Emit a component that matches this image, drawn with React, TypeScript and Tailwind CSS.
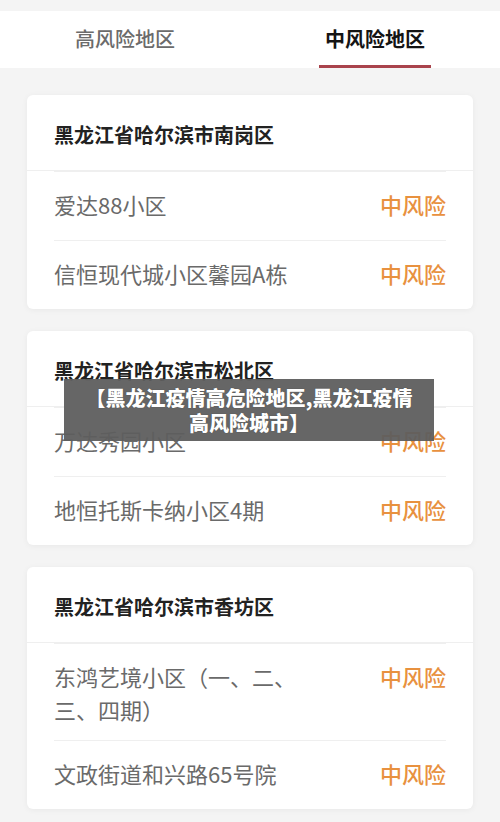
const font = { fontFamily: '"Noto Sans CJK SC", "Noto Sans", sans-serif' }

type Place = { name: string; tall?: boolean }
type Group = { district: string; places: Place[] }

const groups: Group[] = [
  {
    district: '黑龙江省哈尔滨市南岗区',
    places: [{ name: '爱达88小区' }, { name: '信恒现代城小区馨园A栋' }],
  },
  {
    district: '黑龙江省哈尔滨市松北区',
    places: [{ name: '万达秀园小区' }, { name: '地恒托斯卡纳小区4期' }],
  },
  {
    district: '黑龙江省哈尔滨市香坊区',
    places: [{ name: '东鸿艺境小区（一、二、三、四期）', tall: true }, { name: '文政街道和兴路65号院' }],
  },
]

function Tabs() {
  return (
    <div className="mt-[11px] grid h-[57px] grid-cols-2 bg-white">
      <div className="flex items-center justify-center pb-[2px] text-[20px] leading-[26px] font-medium text-[#6b6b6b]">
        高风险地区
      </div>
      <div className="relative flex items-center justify-center pb-[2px] text-[20px] leading-[26px] font-bold text-[#141414]">
        中风险地区
        <span className="absolute bottom-0 left-[69px] h-[3px] w-[112px] bg-[#a9434c]" />
      </div>
    </div>
  )
}

function Row({ place }: { place: Place }) {
  return (
    <div
      className={
        'mx-[27px] flex items-start justify-between border-t border-[#efefef] ' +
        (place.tall ? 'pt-[16px] pb-[14px]' : 'pt-[16px] pb-[19px]')
      }
    >
      <span className="w-[252px] text-[22px] leading-[33px] text-[#6a6a6a]">{place.name}</span>
      <span className="text-[22px] leading-[33px] font-medium text-[#e8913f]">中风险</span>
    </div>
  )
}

function Card({ group }: { group: Group }) {
  return (
    <div className="rounded-[6px] bg-white shadow-[0_1px_6px_rgba(0,0,0,0.05)]">
      <div className="h-[76px] border-b border-[#efefef] px-[27px] pt-[28px] text-[20px] leading-[24px] font-bold text-[#222]">
        {group.district}
      </div>
      {group.places.map((p) => (
        <Row key={p.name} place={p} />
      ))}
    </div>
  )
}

export default function App() {
  return (
    <div className="relative h-[822px] w-[500px] overflow-hidden bg-[#f4f4f4]" style={font}>
      <Tabs />
      <div className="flex flex-col gap-[22px] px-[27px] pt-[27px]">
        {groups.map((g) => (
          <Card key={g.district} group={g} />
        ))}
      </div>
      <div className="absolute left-[64px] top-[379px] w-[370px] bg-[#5e5e5e]/95 px-[14px] py-[6px] text-center text-[20px] leading-[25px] font-black text-white [text-shadow:0_0_1px_rgba(0,0,0,0.4)]">
        【黑龙江疫情高危险地区,黑龙江疫情高风险城市】
      </div>
    </div>
  )
}
